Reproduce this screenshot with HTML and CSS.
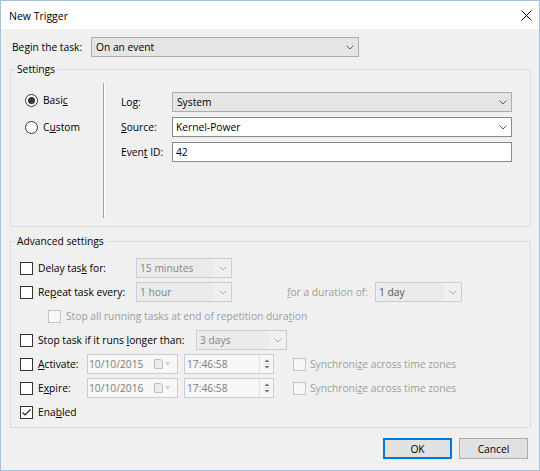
FILE: index.html
```html
<!DOCTYPE html>
<html lang="en">
<head>
<meta charset="utf-8">
<title>New Trigger</title>
<link rel="stylesheet" href="styles.css">
</head>
<body>
<div class="window">
  <div class="titlebar">
    <span class="title">New Trigger</span>
    <svg class="close" width="11" height="11" viewBox="0 0 11 11" aria-hidden="true"><path d="M0.5 0.5L10.5 10.5M10.5 0.5L0.5 10.5"/></svg>
  </div>
  <div class="content">
    <div class="begin-row">
      <span class="begin-label">Begin the task:</span>
      <div class="combo combo-ro begin-combo">
        <span class="combo-text">On an event</span>
        <span class="arrow"><svg width="8" height="5" viewBox="0 0 8 5"><path d="M0.5 0.5L4 4L7.5 0.5"/></svg></span>
      </div>
    </div>

    <fieldset class="group settings">
      <legend>Settings</legend>
      <div class="settings-inner">
        <div class="radios">
          <div class="radio-row"><span class="radio checked"></span><span>Basi<u>c</u></span></div>
          <div class="radio-row"><span class="radio"></span><span>C<u>u</u>stom</span></div>
        </div>
        <div class="sep"></div>
        <div class="fields">
          <div class="field-row">
            <span class="field-label">Lo<u>g</u>:</span>
            <div class="combo combo-ro wide">
              <span class="combo-text">System</span>
              <span class="arrow"><svg width="8" height="5" viewBox="0 0 8 5"><path d="M0.5 0.5L4 4L7.5 0.5"/></svg></span>
            </div>
          </div>
          <div class="field-row">
            <span class="field-label"><u>S</u>ource:</span>
            <div class="combo combo-edit wide">
              <span class="combo-text">Kernel-Power</span>
              <span class="arrow"><svg width="8" height="5" viewBox="0 0 8 5"><path d="M0.5 0.5L4 4L7.5 0.5"/></svg></span>
            </div>
          </div>
          <div class="field-row">
            <span class="field-label">Even<u>t</u> ID:</span>
            <div class="textbox wide">42</div>
          </div>
        </div>
      </div>
    </fieldset>

    <fieldset class="group advanced">
      <legend>Advanced settings</legend>
      <div class="adv-rows">
        <div class="adv-row">
          <span class="check"></span>
          <span class="adv-label w98">Delay tas<u>k</u> for:</span>
          <div class="combo combo-dis w96">
            <span class="combo-text">15 minutes</span>
            <span class="arrow"><svg width="8" height="5" viewBox="0 0 8 5"><path d="M0.5 0.5L4 4L7.5 0.5"/></svg></span>
          </div>
        </div>
        <div class="adv-row">
          <span class="check"></span>
          <span class="adv-label w98">Re<u>p</u>eat task every:</span>
          <div class="combo combo-dis w96">
            <span class="combo-text">1 hour</span>
            <span class="arrow"><svg width="8" height="5" viewBox="0 0 8 5"><path d="M0.5 0.5L4 4L7.5 0.5"/></svg></span>
          </div>
          <span class="adv-label dis duration-label"><u>f</u>or a duration of:</span>
          <div class="combo combo-dis w87">
            <span class="combo-text dark">1 day</span>
            <span class="arrow"><svg width="8" height="5" viewBox="0 0 8 5"><path d="M0.5 0.5L4 4L7.5 0.5"/></svg></span>
          </div>
        </div>
        <div class="adv-row indent">
          <span class="check dis"></span>
          <span class="adv-label dis">Stop all running tasks at end of repetition dura<u>t</u>ion</span>
        </div>
        <div class="adv-row">
          <span class="check"></span>
          <span class="adv-label w158">Stop task if it runs <u>l</u>onger than:</span>
          <div class="combo combo-dis w91">
            <span class="combo-text">3 days</span>
            <span class="arrow"><svg width="8" height="5" viewBox="0 0 8 5"><path d="M0.5 0.5L4 4L7.5 0.5"/></svg></span>
          </div>
        </div>
        <div class="adv-row">
          <span class="check"></span>
          <span class="adv-label w49"><u>A</u>ctivate:</span>
          <div class="datebox">
            <span class="date-text">10/10/2015</span>
            <svg class="cal" width="18" height="12" viewBox="0 0 18 12"><path class="cal-page" d="M1.5 1.5H7.5L9.5 3.5V9.5Q9.5 10.5 8.5 10.5H2.5Q1.5 10.5 1.5 9.5Z"/><path class="cal-arrow" d="M12 4.5H17L14.5 7Z"/></svg>
          </div>
          <div class="timebox">
            <span class="date-text">17:46:58</span>
            <span class="spin"><svg width="12" height="18" viewBox="0 0 12 18"><path class="spin-arrow" d="M3.5 7H8.5L6 4.5Z M3.5 11H8.5L6 13.5Z"/><path class="spin-line" d="M2 9H10"/></svg></span>
          </div>
          <span class="check dis sync-check"></span>
          <span class="adv-label dis">Synchroni<u>z</u>e across time zones</span>
        </div>
        <div class="adv-row">
          <span class="check"></span>
          <span class="adv-label w49">E<u>x</u>pire:</span>
          <div class="datebox">
            <span class="date-text">10/10/2016</span>
            <svg class="cal" width="18" height="12" viewBox="0 0 18 12"><path class="cal-page" d="M1.5 1.5H7.5L9.5 3.5V9.5Q9.5 10.5 8.5 10.5H2.5Q1.5 10.5 1.5 9.5Z"/><path class="cal-arrow" d="M12 4.5H17L14.5 7Z"/></svg>
          </div>
          <div class="timebox">
            <span class="date-text">17:46:58</span>
            <span class="spin"><svg width="12" height="18" viewBox="0 0 12 18"><path class="spin-arrow" d="M3.5 7H8.5L6 4.5Z M3.5 11H8.5L6 13.5Z"/><path class="spin-line" d="M2 9H10"/></svg></span>
          </div>
          <span class="check dis sync-check"></span>
          <span class="adv-label dis">Synchroni<u>z</u>e across time zones</span>
        </div>
        <div class="adv-row">
          <span class="check checked"><svg width="11" height="11" viewBox="0 0 11 11"><path d="M1.5 5.5L4 8L9.5 2.5"/></svg></span>
          <span class="adv-label">Ena<u>b</u>led</span>
        </div>
      </div>
    </fieldset>

    <div class="buttons">
      <button class="btn btn-default" type="button">OK</button>
      <button class="btn" type="button">Cancel</button>
    </div>
  </div>
</div>
</body>
</html>
```

FILE: styles.css
```css
* { box-sizing: border-box; }
html, body { margin: 0; padding: 0; }
body {
  width: 540px;
  height: 471px;
  overflow: hidden;
  background: #ffffff;
  font-family: "Open Sans", "Noto Sans", sans-serif;
  font-size: 10.25px;
  color: #000;
}
u { text-decoration: underline; text-underline-offset: 1px; }

.window {
  width: 540px;
  height: 471px;
  border: 1px solid #a3c2e0;
  display: flex;
  flex-direction: column;
}
.titlebar {
  height: 28px;
  flex: none;
  background: #ffffff;
  display: flex;
  align-items: center;
  justify-content: space-between;
  padding: 0 7px 0 8px;
}
.title { line-height: 14px; margin-top: 1px; font-size: 10.5px; }
.close path { stroke: #000; stroke-width: 1; fill: none; }

.content {
  flex: 1;
  background: #f0f0f0;
  padding: 8px 8px 0 9px;
  display: flex;
  flex-direction: column;
}

.begin-row {
  display: flex;
  align-items: center;
  height: 20px;
  padding-left: 2px;
}
.begin-label { width: 79px; }
.begin-combo { width: 268px; }

.combo {
  height: 20px;
  display: flex;
  align-items: center;
  border: 1px solid #adadad;
}
.combo-text { flex: 1; padding-left: 3px; white-space: nowrap; overflow: hidden; }
.arrow {
  width: 17px;
  height: 100%;
  display: flex;
  align-items: center;
  justify-content: center;
  flex: none;
}
.arrow path { fill: none; stroke: #5a5a5a; stroke-width: 1; }
.combo-ro { background: #e5e5e5; border-color: #adadad; }
.combo-ro .combo-text { padding-left: 4px; }
.combo-edit { background: #ffffff; border-color: #8a8a8a; }
.combo-dis { background: #f0f0f0; border-color: #cccccc; }
.combo-dis .combo-text { color: #858585; background: #ebebeb; height: 100%; line-height: 18px; padding-left: 2px; margin-left: 1px; }
.combo-dis .combo-text.dark { color: #555555; }
.combo-dis .arrow path { stroke: #a8a8a8; }
.textbox {
  height: 20px;
  background: #ffffff;
  border: 1px solid #8a8a8a;
  padding-left: 3px;
  line-height: 18px;
}
.wide { width: 340px; }

.group {
  margin: 0;
  padding: 0;
  border: 1px solid #dcdcdc;
  min-width: 0;
}
.group legend {
  padding: 0 2px;
  margin-left: 4px;
  line-height: 15px;
}
.settings { margin-top: 5px; }
.settings-inner {
  display: flex;
  padding: 6px 0 8px 0;
}
.radios {
  width: 92px;
  padding: 9px 0 0 14px;
  display: flex;
  flex-direction: column;
  gap: 11px;
}
.radio-row { display: flex; align-items: center; height: 16px; gap: 5px; }
.radio {
  width: 13px;
  height: 13px;
  border: 1px solid #333333;
  border-radius: 50%;
  background: #ffffff;
  flex: none;
  display: flex;
  align-items: center;
  justify-content: center;
}
.radio.checked::after {
  content: "";
  width: 7px;
  height: 7px;
  border-radius: 50%;
  background: #333333;
}
.sep {
  width: 2px;
  height: 135px;
  border-left: 1px solid #a0a0a0;
  border-right: 1px solid #ffffff;
  flex: none;
}
.fields {
  padding: 9px 0 0 16px;
  display: flex;
  flex-direction: column;
  gap: 5px;
}
.field-row { display: flex; align-items: center; height: 20px; }
.field-label { width: 51px; }

.advanced { margin-top: 7px; }
.adv-rows { padding: 7px 0 3px 9px; display: flex; flex-direction: column; }
.adv-row { height: 24px; display: flex; align-items: center; }
.adv-row.indent { padding-left: 28px; }
.check {
  width: 13px;
  height: 13px;
  border: 1px solid #333333;
  background: #ffffff;
  flex: none;
  margin-right: 5px;
  display: flex;
  align-items: center;
  justify-content: center;
}
.check.dis { border-color: #c4c4c4; background: #f7f7f7; }
.check.checked path { fill: none; stroke: #222; stroke-width: 1.2; }
.adv-label { white-space: nowrap; flex: none; }
.adv-label.dis { color: #9d9d9d; }
.w98 { width: 98px; }
.w49 { width: 49px; }
.w158 { width: 158px; }
.w96 { width: 96px; }
.w91 { width: 91px; }
.w87 { width: 87px; }
.duration-label { width: 88px; margin-left: 55px; }

.datebox, .timebox {
  height: 20px;
  border: 1px solid #cccccc;
  background: #f7f7f7;
  display: flex;
  align-items: center;
  flex: none;
}
.datebox { width: 91px; padding-left: 1px; }
.timebox { width: 90px; margin-left: 6px; padding-left: 2px; }
.date-text { flex: 1; color: #7b7b7b; }
.cal { margin-right: 6px; }
.cal-page { fill: #ececec; stroke: #bdbdbd; stroke-width: 1; }
.cal-arrow { fill: #bdbdbd; }
.spin {
  width: 14px;
  height: 100%;
  border-left: 1px solid #e0e0e0;
  display: flex;
  align-items: center;
  justify-content: center;
}
.spin-arrow { fill: #707070; }
.spin-line { stroke: #d8d8d8; stroke-width: 1; }
.sync-check { margin-left: 19px; margin-right: 4px; }

.buttons {
  display: flex;
  justify-content: flex-end;
  gap: 7px;
  margin-top: 10px;
  padding-right: 3px;
}
.btn {
  width: 69px;
  height: 21px;
  background: #e1e1e1;
  border: 1px solid #adadad;
  font-family: "Open Sans", "Noto Sans", sans-serif;
  font-size: 10.25px;
  color: #000;
  padding: 0;
}
.btn-default { border: 2px solid #0078d7; }
```
